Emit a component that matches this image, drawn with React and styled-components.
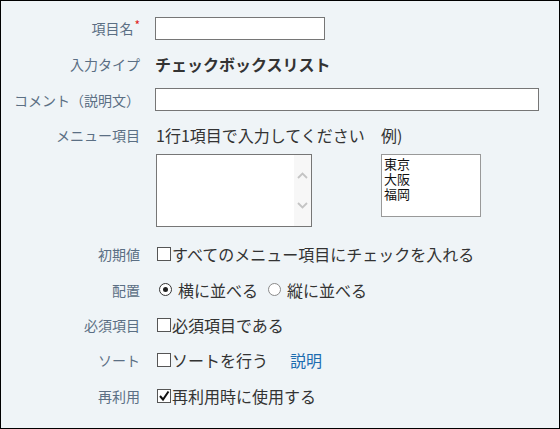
import React from "react";
import styled, { createGlobalStyle } from "styled-components";

const GlobalStyle = createGlobalStyle`
  html, body {
    margin: 0;
    padding: 0;
    background: #fff;
  }
  body {
    font-family: "Noto Sans CJK JP", "Noto Sans", sans-serif;
  }
`;

const Frame = styled.div`
  box-sizing: border-box;
  width: 560px;
  height: 429px;
  border: 1px solid #000;
  background: #eff4f7;
  padding-top: 9px;
  color: #333;
`;

const Row = styled.div`
  display: flex;
  align-items: ${(p) => (p.$top ? "flex-start" : "center")};
  height: ${(p) => p.$h || 36}px;
`;

const Label = styled.div`
  width: 139px;
  flex: none;
  text-align: right;
  font-size: 14px;
  color: #5b6f84;
  line-height: 36px;
  white-space: nowrap;
`;

const Req = styled.span`
  position: relative;
  top: -4px;
  color: #e0201c;
  font-size: 12px;
  line-height: 0;
  margin-left: 1px;
`;

const Value = styled.div`
  margin-left: 15px;
  display: flex;
  align-items: center;
  font-size: 16px;
  line-height: 36px;
  white-space: nowrap;
`;

const TextInput = styled.div`
  box-sizing: border-box;
  width: ${(p) => p.$w}px;
  height: 23px;
  border: 1px solid #767676;
  background: #fff;
`;

const Bold = styled.span`
  font-weight: bold;
  color: #333;
`;

const MenuGrid = styled.div`
  margin-left: 16px;
  display: grid;
  grid-template-columns: 225px auto;
  grid-template-rows: 36px auto;
  font-size: 16px;
  line-height: 36px;
  white-space: nowrap;
`;

const TextArea = styled.div`
  box-sizing: border-box;
  width: 156px;
  height: 73px;
  border: 1px solid #767676;
  background: #fff;
  display: flex;
  justify-content: flex-end;
  margin-top: 1px;
`;

const ScrollBar = styled.div`
  width: 17px;
  background: #f7f7f7;
  display: flex;
  flex-direction: column;
  align-items: center;
  justify-content: space-around;
  padding: 6px 0;
`;

const ExampleBox = styled.div`
  box-sizing: border-box;
  width: 100px;
  height: 63px;
  border: 1px solid #999;
  background: #fff;
  padding: 1px 2px 0;
  margin-top: 1px;
  font-size: 13px;
  line-height: 15px;
  color: #111;
`;

const Box = styled.span`
  box-sizing: border-box;
  display: inline-flex;
  align-items: center;
  justify-content: center;
  width: 14px;
  height: 14px;
  border: 1px solid #555;
  background: #fff;
  margin: 0 1px 0 2px;
`;

const Radio = styled.span`
  box-sizing: border-box;
  display: inline-flex;
  align-items: center;
  justify-content: center;
  width: 13px;
  height: 13px;
  border-radius: 50%;
  border: 1px solid ${(p) => (p.$on ? "#333" : "#8a8a8a")};
  background: #fff;
  margin: 0 6px 0 4px;
  &::after {
    content: "";
    display: ${(p) => (p.$on ? "block" : "none")};
    width: 5px;
    height: 5px;
    border-radius: 50%;
    background: #222;
  }
`;

const RadioText = styled.span`
  margin-right: 6px;
`;

const Link = styled.a`
  color: #1c6cb0;
  text-decoration: none;
  margin-left: 22px;
`;

const Chevron = ({ up }) => (
  <svg width="11" height="7" viewBox="0 0 11 7">
    <path
      d={up ? "M1 6 L5.5 1.5 L10 6" : "M1 1 L5.5 5.5 L10 1"}
      fill="none"
      stroke="#c4c4c4"
      strokeWidth="1.8"
    />
  </svg>
);

const Check = () => (
  <svg width="12" height="12" viewBox="0 0 12 12">
    <path d="M2 6 L5 9.5 L10.5 1.5" fill="none" stroke="#111" strokeWidth="2" />
  </svg>
);

export default function App() {
  return (
    <>
      <GlobalStyle />
      <Frame>
        <Row>
          <Label>
            項目名<Req>*</Req>
          </Label>
          <Value>
            <TextInput $w={170} />
          </Value>
        </Row>
        <Row>
          <Label>入力タイプ</Label>
          <Value>
            <Bold>チェックボックスリスト</Bold>
          </Value>
        </Row>
        <Row $h={35}>
          <Label>コメント（説明文）</Label>
          <Value>
            <TextInput $w={384} />
          </Value>
        </Row>
        <Row $top $h={119}>
          <Label>メニュー項目</Label>
          <MenuGrid>
            <span>1行1項目で入力してください</span>
            <span>例)</span>
            <TextArea>
              <ScrollBar>
                <Chevron up />
                <Chevron />
              </ScrollBar>
            </TextArea>
            <ExampleBox>
              東京
              <br />
              大阪
              <br />
              福岡
            </ExampleBox>
          </MenuGrid>
        </Row>
        <Row>
          <Label>初期値</Label>
          <Value>
            <Box />
            すべてのメニュー項目にチェックを入れる
          </Value>
        </Row>
        <Row $h={35}>
          <Label>配置</Label>
          <Value>
            <Radio $on />
            <RadioText>横に並べる</RadioText>
            <Radio />
            <RadioText>縦に並べる</RadioText>
          </Value>
        </Row>
        <Row $h={35}>
          <Label>必須項目</Label>
          <Value>
            <Box />
            必須項目である
          </Value>
        </Row>
        <Row $h={36}>
          <Label>ソート</Label>
          <Value>
            <Box />
            ソートを行う
            <Link href="#">説明</Link>
          </Value>
        </Row>
        <Row>
          <Label>再利用</Label>
          <Value>
            <Box>
              <Check />
            </Box>
            再利用時に使用する
          </Value>
        </Row>
      </Frame>
    </>
  );
}
